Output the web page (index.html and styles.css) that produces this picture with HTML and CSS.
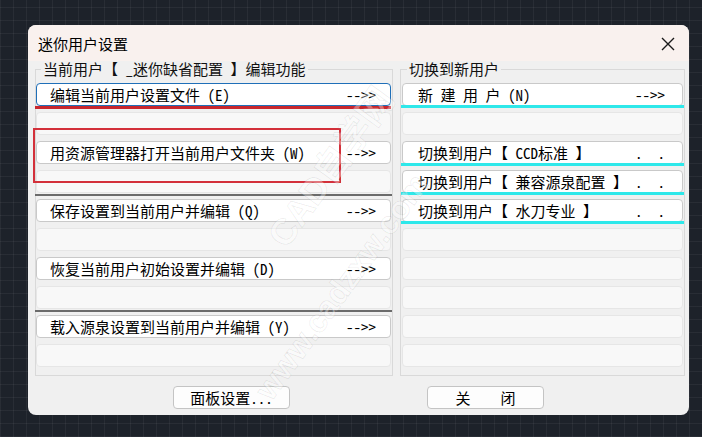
FILE: index.html
```html
<!DOCTYPE html>
<html>
<head>
  <title>迷你用户设置</title>
  <link rel="stylesheet" href="styles.css">
</head>
<body>

<div class="dialog">
  <div class="titlebar">
    <span class="title">迷你用户设置</span>
    <svg class="close" width="14" height="14" viewBox="0 0 14 14">
      <path d="M1 1 L13 13 M13 1 L1 13" stroke="#1a1a1a" stroke-width="1.4" fill="none"/>
    </svg>
  </div>

  <div class="content">
    <div class="groups">
      <fieldset class="group group-left">
        <legend>当前用户【 _迷你缺省配置 】编辑功能</legend>
        <div class="rows">
          <div class="row btn focused mark-red"><span>编辑当前用户设置文件 (E)</span><span>--&gt;&gt;</span></div>
          <div class="row slot"></div>
          <div class="row btn"><span>用资源管理器打开当前用户文件夹 (W)</span><span>--&gt;&gt;</span></div>
          <div class="row slot sep"></div>
          <div class="row btn"><span>保存设置到当前用户并编辑 (Q)</span><span>--&gt;&gt;</span></div>
          <div class="row slot"></div>
          <div class="row btn"><span>恢复当前用户初始设置并编辑 (D)</span><span>--&gt;&gt;</span></div>
          <div class="row slot sep"></div>
          <div class="row btn"><span>载入源泉设置到当前用户并编辑 (Y)</span><span>--&gt;&gt;</span></div>
          <div class="row slot"></div>
        </div>
      </fieldset>

      <fieldset class="group group-right">
        <legend>切换到新用户</legend>
        <div class="rows">
          <div class="row btn wide mark-cyan"><span>新 建 用 户 (N)</span><span>--&gt;&gt;</span></div>
          <div class="row slot"></div>
          <div class="row btn wide mark-cyan"><span>切换到用户【 CCD标准 】</span><span class="dots">.  .</span></div>
          <div class="row btn wide mark-cyan"><span>切换到用户【 兼容源泉配置 】</span><span class="dots">.  .</span></div>
          <div class="row btn wide mark-cyan"><span>切换到用户【 水刀专业 】</span><span class="dots">.  .</span></div>
          <div class="row slot"></div>
          <div class="row slot"></div>
          <div class="row slot"></div>
          <div class="row slot"></div>
          <div class="row slot"></div>
        </div>
      </fieldset>
    </div>

    <div class="footer">
      <div class="pushbtn">面板设置...</div>
      <div class="pushbtn">关　　闭</div>
    </div>
  </div>

  <div class="redbox"></div>
  <div class="watermark wm-1">CAD自学网</div>
  <div class="watermark wm-2">www.cadzxw.com</div>
</div>

</body>
</html>
```

FILE: styles.css
```css
html, body {
  margin: 0;
  height: 100%;
}
body {
  font-family: "Noto Sans CJK SC", "Liberation Sans", sans-serif;
  background-color: #1d222a;
  background-image:
    repeating-linear-gradient(90deg, rgba(255,255,255,0.05) 0 1px, transparent 1px 13px),
    repeating-linear-gradient(0deg, rgba(255,255,255,0.05) 0 1px, transparent 1px 13px);
  padding: 25px 0 0 28px;
  box-sizing: border-box;
  overflow: hidden;
}
.dialog {
  position: relative;
  width: 661px;
  height: 390px;
  background: #f0f0f0;
  border-radius: 8px;
  overflow: hidden;
  color: #000;
}
.titlebar {
  height: 36px;
  background: #f9f1ee;
  display: flex;
  align-items: center;
  justify-content: space-between;
  padding: 0 14px 0 10px;
}
.title {
  font-size: 15px;
}
.close {
  margin-top: 2px;
}
.content {
  padding: 0 4px 0 7px;
}
.groups {
  display: flex;
  gap: 7px;
}
.group {
  margin: 0;
  border: 1px solid #d9d9d9;
  padding: 6px 1px 8px 1px;
  box-sizing: border-box;
}
.group-left {
  width: 358px;
  padding-left: 0;
}
.group-right {
  width: 285px;
}
.group legend {
  font-family: "Noto Sans Mono CJK SC", "Noto Sans CJK SC", monospace;
  font-size: 15px;
  line-height: 16px;
  padding: 0 2px;
  margin-left: 5px;
  color: #111;
  white-space: pre;
}
.rows {
  display: flex;
  flex-direction: column;
  gap: 6px;
}
.row {
  position: relative;
  height: 23px;
  box-sizing: border-box;
  border-radius: 4px;
}
.btn {
  background: #fff;
  border: 1px solid #c9c9c9;
  display: flex;
  align-items: center;
  justify-content: space-between;
  padding: 0 14px 0 13px;
  font-family: "Noto Sans Mono CJK SC", "Noto Sans CJK SC", monospace;
  font-size: 15px;
  white-space: pre;
}
.btn.wide {
  padding: 0 17px 0 15px;
}
.btn.focused {
  border-color: #1f6fb8;
}
.slot {
  background: #f8f8f8;
  border: 1px solid #e6e6e6;
}
.sep::after {
  content: "";
  position: absolute;
  left: -2px;
  right: -2px;
  top: 100%;
  margin-top: 2px;
  height: 2px;
  background: #6b6b6b;
}
.mark-red::after {
  content: "";
  position: absolute;
  left: -2px;
  right: -1px;
  top: 100%;
  margin-top: 1px;
  height: 3px;
  background: #c8262d;
}
.mark-cyan::after {
  content: "";
  position: absolute;
  left: -2px;
  right: -2px;
  top: 100%;
  height: 3px;
  background: #2ee8ea;
}
.footer {
  display: flex;
  gap: 137px;
  padding: 10px 0 0 138px;
}
.pushbtn {
  width: 117px;
  height: 23px;
  box-sizing: border-box;
  background: #fdfdfd;
  border: 1px solid #c4c4c4;
  border-radius: 4px;
  display: flex;
  align-items: center;
  justify-content: center;
  font-family: "Noto Sans Mono CJK SC", "Noto Sans CJK SC", monospace;
  font-size: 15px;
}
.redbox {
  position: absolute;
  left: 5px;
  top: 103px;
  width: 308px;
  height: 55px;
  box-sizing: border-box;
  border: 2px solid #d3303a;
}
.watermark {
  position: absolute;
  font-family: "Liberation Sans", "Noto Sans CJK SC", sans-serif;
  font-weight: bold;
  color: rgba(255,255,255,0.35);
  -webkit-text-stroke: 1px rgba(0,0,0,0.07);
  white-space: nowrap;
  transform: translate(-50%, -50%) rotate(-54deg);
  pointer-events: none;
}
.wm-1 {
  left: 300px;
  top: 140px;
  font-size: 36px;
}
.wm-2 {
  left: 314px;
  top: 262px;
  font-size: 32px;
}
```
